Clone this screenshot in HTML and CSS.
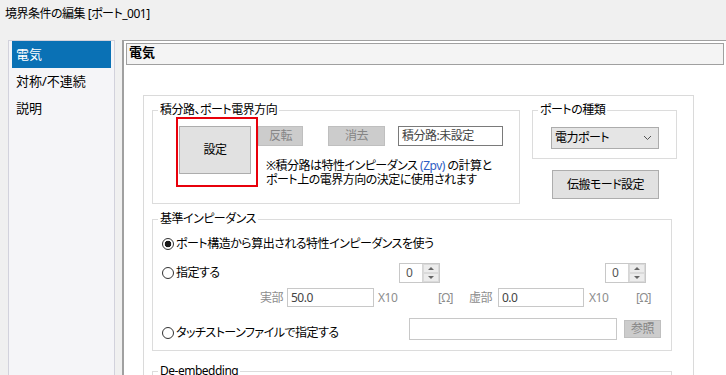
FILE: index.html
```html
<!DOCTYPE html>
<html lang="ja">
<head>
  <meta charset="UTF-8" />
  <title>境界条件の編集</title>
  <link rel="stylesheet" href="styles.css">
</head>
<body>
  <div class="title">境界条件の編集 [ポート_001]</div>

  <div class="dialog">
    <ul class="nav">
      <li class="active">電気</li>
      <li>対称/不連続</li>
      <li>説明</li>
    </ul>

    <div class="main">
      <div class="page-head">電気</div>

      <div class="page">
        <div class="panel">

          <div class="top-row">
            <fieldset class="group path">
              <legend>積分路、ポート電界方向</legend>
              <div class="path-body">
                <div class="highlight">
                  <button class="btn big">設定</button>
                </div>
                <div class="path-side">
                  <div class="btn-row">
                    <button class="btn off flip">反転</button>
                    <button class="btn off clear">消去</button>
                    <div class="field path-state">積分路:未設定</div>
                  </div>
                  <p class="note">※積分路は特性インピーダンス <span class="blue">(Zpv)</span> の計算と<br>ポート上の電界方向の決定に使用されます</p>
                </div>
              </div>
            </fieldset>

            <div class="port-col">
              <fieldset class="group port">
                <legend>ポートの種類</legend>
                <div class="combo">
                  <span>電力ポート</span>
                  <svg width="9" height="6" viewBox="0 0 9 6"><polyline points="1,1 4.5,4.5 8,1" fill="none" stroke="#555" stroke-width="1"/></svg>
                </div>
              </fieldset>
              <button class="btn mode">伝搬モード設定</button>
            </div>
          </div>

          <fieldset class="group imp">
            <legend>基準インピーダンス</legend>

            <div class="row r1">
              <label class="opt"><span class="radio on"></span>ポート構造から算出される特性インピーダンスを使う</label>
            </div>

            <div class="row r2">
              <label class="opt w-spec"><span class="radio"></span>指定する</label>
              <div class="spin">
                <span class="spin-val">0</span>
                <span class="spin-btns"><span class="up"></span><span class="down"></span></span>
              </div>
              <div class="spin spin-im">
                <span class="spin-val">0</span>
                <span class="spin-btns"><span class="up"></span><span class="down"></span></span>
              </div>
            </div>

            <div class="row r3">
              <span class="dim lbl">実部</span>
              <div class="field off-field re">50.0</div>
              <span class="dim unit">X10</span>
              <span class="dim ohm">[Ω]</span>
              <span class="dim lbl im">虚部</span>
              <div class="field off-field imv">0.0</div>
              <span class="dim unit unit2">X10</span>
              <span class="dim ohm">[Ω]</span>
            </div>

            <div class="row r4">
              <label class="opt w-ts"><span class="radio"></span>タッチストーンファイルで指定する</label>
              <div class="field off-field ts"></div>
              <button class="btn off browse">参照</button>
            </div>
          </fieldset>

          <fieldset class="group deemb">
            <legend>De-embedding</legend>
          </fieldset>

        </div>
      </div>
    </div>
  </div>
</body>
</html>
```

FILE: styles.css
```css
* {
  box-sizing: border-box;
}

body {
  margin: 0;
  width: 726px;
  height: 375px;
  overflow: hidden;
  background: #f0f0f0;
  color: #000;
  font-family: "Noto Sans", "Noto Sans CJK JP", sans-serif;
  font-size: 12px;
  line-height: 14px;
  letter-spacing: -0.5px;
  font-feature-settings: "palt";
}

.title {
  height: 40px;
  padding: 7px 0 0 5px;
}

.dialog {
  display: flex;
  height: 335px;
  padding-left: 8px;
}

/* left tab list */
.nav {
  width: 107px;
  margin: 0 7px 0 0;
  padding: 0 3px;
  list-style: none;
  background: #f5f5f8;
  border: 1px solid #d2d2dc;
  border-bottom: none;
  font-size: 13px;
  letter-spacing: 0;
}

.nav li {
  height: 27px;
  line-height: 27px;
  padding-left: 4px;
}

.nav li.active {
  background: #0a71b5;
  color: #fff;
}

/* right page */
.main {
  flex: 1;
  background: #fff;
  border-top: 1px solid #a0a0a0;
  border-left: 2px solid #a0a0a0;
  padding: 2px 2px 0 2px;
  overflow: hidden;
}

.page-head {
  height: 22px;
  border: 1px solid #a0a0a0;
  background: #f4f4f4;
  font-weight: bold;
  font-size: 13px;
  line-height: 17px;
  letter-spacing: 0;
  padding-left: 2px;
}

.page {
  padding: 30px 0 0 17px;
}

.panel {
  width: 551px;
  height: 280px;
  overflow: hidden;
  border: 1px solid #dadada;
  border-bottom: none;
  padding: 7px 0 0 8px;
}

/* group boxes */
.group {
  margin: 0;
  padding: 0;
  min-width: 0;
  border: 1px solid #dcdcdc;
}

.group legend {
  margin-left: 5px;
  padding: 0 2px;
  line-height: 14px;
}

.top-row {
  display: flex;
  align-items: flex-start;
  gap: 12px;
}

.path {
  width: 368px;
  height: 101px;
}

.path-body {
  display: flex;
  padding-left: 23px;
}

.highlight {
  border: 2px solid #e8000b;
  padding: 7px 5px 6px 1px;
}

.btn {
  font: inherit;
  letter-spacing: inherit;
  font-feature-settings: "palt";
  margin: 0;
  padding: 0;
  border: 1px solid #adadad;
  background: #e1e1e1;
  color: #000;
}

.btn.off {
  background: #cccccc;
  border-color: #bfbfbf;
  color: #858585;
}

.big {
  display: block;
  width: 72px;
  height: 48px;
}

.path-side {
  padding-top: 9px;
}

.btn-row {
  display: flex;
  height: 20px;
}

.flip {
  width: 45px;
}

.clear {
  width: 57px;
  margin-left: 25px;
}

.field {
  height: 100%;
  border: 1px solid #c8c8c8;
  background: #fff;
  padding-left: 3px;
  color: #444;
  line-height: 17px;
}

.path-state {
  width: 105px;
  margin-left: 13px;
  border-color: #7a7a7a;
}

.note {
  margin: 13px 0 0 8px;
  line-height: 14px;
}

.blue {
  color: #2f5ec4;
}

.port-col {
  width: 145px;
}

.port {
  height: 56px;
}

.combo {
  display: flex;
  align-items: center;
  justify-content: space-between;
  width: 108px;
  height: 22px;
  margin: 10px 0 0 18px;
  padding: 0 6px 0 3px;
  background: #e5e5e5;
  border: 1px solid #acacac;
}

.mode {
  display: block;
  width: 107px;
  height: 29px;
  margin: 11px 0 0 20px;
}

/* reference impedance */
.imp {
  width: 520px;
  height: 139px;
  margin-top: 8px;
}

.row {
  display: flex;
  align-items: center;
}

.opt {
  display: flex;
  align-items: center;
}

.radio {
  width: 12px;
  height: 12px;
  margin-right: 2px;
  border: 1px solid #333;
  border-radius: 50%;
  background: #fff;
}

.radio.on {
  background: radial-gradient(circle, #1a1a1a 0 3px, #fff 3.6px);
}

.r1 {
  height: 20px;
  margin-top: 8px;
  padding-left: 9px;
}

.r2 {
  height: 20px;
  margin-top: 9px;
  padding-left: 9px;
}

.w-spec {
  width: 237px;
}

.spin {
  display: flex;
  width: 41px;
  height: 20px;
  border: 1px solid #c8c8c8;
  background: #fff;
}

.spin-im {
  margin-left: 165px;
}

.spin-val {
  flex: 1;
  padding-left: 6px;
  line-height: 18px;
  color: #555;
}

.spin-btns {
  display: flex;
  flex-direction: column;
  width: 17px;
  background: #f0f0f0;
  border-left: 1px solid #d6d6d6;
}

.spin-btns span {
  flex: 1;
  display: flex;
  align-items: center;
  justify-content: center;
  border: 1px solid #dadada;
  background: #ececec;
}

.spin-btns .up::after {
  content: "";
  border: 3px solid transparent;
  border-bottom: 3px solid #666;
  border-top: 0;
}

.spin-btns .down::after {
  content: "";
  border: 3px solid transparent;
  border-top: 3px solid #666;
  border-bottom: 0;
}

.r3 {
  height: 19px;
  margin-top: 5px;
  padding-left: 107px;
}

.dim {
  color: #8d8d8d;
}

.lbl {
  width: 27px;
}

.im {
  width: 29px;
}

.off-field {
  width: 87px;
}

.imv {
  width: 86px;
}

.unit {
  width: 64px;
  padding-left: 4px;
}

.unit2 {
  width: 52px;
  padding-left: 5px;
}

.ohm {
  width: 31px;
}

.r4 {
  align-items: flex-start;
  height: 22px;
  margin-top: 11px;
  padding-left: 9px;
}

.w-ts {
  width: 247px;
  margin-top: 8px;
}

.ts {
  width: 208px;
  height: 22px;
}

.browse {
  width: 37px;
  height: 18px;
  margin: 2px 0 0 7px;
}

.deemb {
  width: 520px;
  height: 40px;
  margin-top: 13px;
}
```
